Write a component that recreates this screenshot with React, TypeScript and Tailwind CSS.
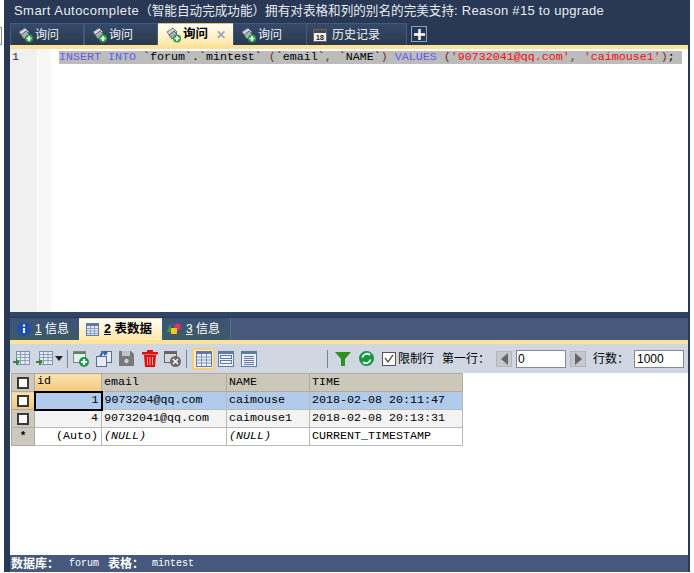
const mono = "font-['Liberation_Mono','DejaVu_Sans_Mono',monospace]"

const QueryIcon = () => (
  <svg width="17" height="17" viewBox="0 0 17 17" className="shrink-0">
    <path d="M2 6 L8 2 L12 6 L6 11 Z" fill="#d4d8dc" stroke="#6b7480" />
    <path d="M4 9 L9 5 L12 8 L7 13 Z" fill="#a9b0b8" stroke="#59626d" />
    <circle cx="12" cy="12.5" r="4" fill="#2f9e44" />
    <path d="M12 10 V15 M9.5 12.5 H14.5" stroke="#fff" strokeWidth="1.6" />
  </svg>
)

const CalendarIcon = () => (
  <svg width="14" height="14" viewBox="0 0 14 14" className="shrink-0">
    <rect x="0.5" y="1.5" width="13" height="12" fill="#f0f0f0" stroke="#666" />
    <rect x="1" y="2" width="12" height="3" fill="#4a4a4a" />
    <text x="7" y="12" textAnchor="middle" fontSize="7" fontWeight="700" fill="#222" fontFamily="Liberation Sans">18</text>
  </svg>
)

const Tab = ({ label, active, close }: { label: string; active?: boolean; close?: boolean }) => (
  <div
    className={
      active
        ? "flex h-[22px] w-[75px] items-center border-t border-[#e5c365] bg-gradient-to-b from-[#fffdf5] to-[#ffe8a6] pl-[7px] text-[12.5px] font-bold text-black"
        : "flex h-[22px] w-[74px] items-center border border-b-0 border-[#43597d] bg-gradient-to-b from-[#35496a] to-[#2a3a4c] pl-[6px] text-[12px] text-[#eef1f6]"
    }
  >
    <QueryIcon />
    <span className="ml-[1px]">{label}</span>
    {close && <span className="ml-[8px] text-[12px] font-bold text-[#9aa5bd]">✕</span>}
  </div>
)

const ToolGrid = ({ arrow }: { arrow?: boolean }) => (
  <svg width="17" height="17" viewBox="0 0 17 17" className="shrink-0">
    <rect x="3.5" y="1.5" width="13" height="13" fill="#e8edf5" stroke="#7d8fb0" />
    <path d="M3.5 4.5 H16.5 M3.5 7.5 H16.5 M3.5 10.5 H16.5 M7.5 2 V14 M12 2 V14" stroke="#8ea0bf" />
    {arrow && <path d="M0 11 H3 V8.5 L7 12 L3 15.5 V13 H0 Z" fill="#2f8a2f" />}
  </svg>
)

const ViewIcon = ({ kind }: { kind: "grid" | "form" | "text" }) => (
  <svg width="16" height="16" viewBox="0 0 16 16" className="shrink-0">
    <rect x="0.5" y="0.5" width="15" height="15" fill="#eef2f8" stroke="#5f7aa5" />
    <rect x="1" y="1" width="14" height="2" fill="#5f7aa5" />
    {kind === "grid" && <path d="M1 6 H15 M1 9 H15 M1 12 H15 M5.5 3 V15 M10.5 3 V15" stroke="#7f96bb" />}
    {kind === "form" && (
      <>
        <rect x="2.5" y="4.5" width="11" height="3" fill="none" stroke="#5f7aa5" />
        <rect x="2.5" y="9.5" width="11" height="3" fill="none" stroke="#5f7aa5" />
      </>
    )}
    {kind === "text" && <path d="M3 5.5 H13 M3 7.5 H13 M3 9.5 H13 M3 11.5 H13 M3 13.5 H13" stroke="#5f7aa5" />}
  </svg>
)

const Sep = () => <div className="mx-[3px] h-[18px] w-px bg-[#7a8494]" />

const RowHead = ({ active, star }: { active?: boolean; star?: boolean }) => (
  <td className={`h-[18px] w-[23px] border border-[#a9a9a9] p-0 text-center text-[11px] leading-none ${active ? "bg-gradient-to-b from-[#fbe3ae] to-[#f3c67b]" : "bg-[#cdcabd]"}`}>
    {star ? (
      <span className="font-bold">*</span>
    ) : (
      <span className="mx-auto block h-[12px] w-[12px] border-2 border-[#3a3a3a] bg-white" />
    )}
  </td>
)

const cell = "h-[18px] border border-[#b9b9b9] px-[2px] py-0 text-[11.67px] leading-none whitespace-nowrap"
const head = "h-[17px] border border-[#b0ad9f] px-[2px] py-0 text-left text-[11.67px] font-normal leading-none bg-[#cbc7b9]"

export default function App() {
  return (
    <div className="relative h-[573px] w-[694px] overflow-hidden bg-white pr-[4px] pb-[1px] pl-[4px] font-['Liberation_Sans','Noto_Sans_CJK_SC',sans-serif]">
      <div className="absolute top-[27px] left-0 h-[18px] w-[2px] border-y border-r border-[#888]" />
      <div className="flex h-full flex-col bg-[#293955] pr-[2px] pl-[6px]">
        {/* title */}
        <div className="flex h-[22px] shrink-0 items-center pl-[4px] text-[12.6px] whitespace-nowrap text-[#e8ecf2]">
          <span className="text-[13px] tracking-[0.45px]">Smart Autocomplete</span>
          <span>（智能自动完成功能）拥有对表格和列的别名的完美支持</span>
          <span className="text-[13px] tracking-[0.3px]">: Reason #15 to upgrade</span>
        </div>

        {/* query tabs */}
        <div className="flex h-[23px] shrink-0 items-end">
          <Tab label="询问" />
          <Tab label="询问" />
          <Tab label="询问" active close />
          <Tab label="询问" />
          <div className="-ml-px flex h-[22px] w-[101px] items-center gap-[5px] border border-b-0 border-[#43597d] bg-gradient-to-b from-[#35496a] to-[#2a3a4c] pl-[6px] text-[12px] text-[#eef1f6]">
            <CalendarIcon />
            <span>历史记录</span>
          </div>
          <div className="mb-[3px] ml-[4px] flex h-[16px] w-[16px] items-center justify-center border border-[#8fa0bb] bg-[#293955]">
            <svg width="11" height="11" viewBox="0 0 11 11">
              <path d="M5.5 0 V11 M0 5.5 H11" stroke="#fff" strokeWidth="2.4" />
            </svg>
          </div>
        </div>
        <div className="h-[4px] shrink-0 bg-[#fde29b]" />

        {/* editor */}
        <div className="flex h-[263px] shrink-0 bg-white">
          <div className={`w-[27px] shrink-0 bg-[#f0f0f0] pt-[2px] pl-[2px] text-[11.67px] leading-[13px] text-[#402040] ${mono}`}>1</div>
          <div className="w-[14px] shrink-0 bg-[#f7f7f7]" />
          <div className="min-w-0 flex-1 pt-[2px] pr-[6px] pl-[8px]">
            <div className={`h-[13px] bg-[#bcbcbc] text-[11.67px] leading-[13px] whitespace-pre ${mono}`}>
              <span className="text-[#5f5fe8]">INSERT INTO</span>
              <span className="text-black"> `forum`.`mintest` </span>
              <span className="text-[#7a2a10]">(</span>
              <span className="text-black">`email`</span>
              <span className="text-[#7a2a10]">,</span>
              <span className="text-black"> `NAME`</span>
              <span className="text-[#7a2a10]">)</span>
              <span className="text-[#5f5fe8]"> VALUES </span>
              <span className="text-[#7a2a10]">(</span>
              <span className="text-[#f01010]">'90732041@qq.com'</span>
              <span className="text-[#7a2a10]">, </span>
              <span className="text-[#f01010]">'caimouse1'</span>
              <span className="text-[#7a2a10]">)</span>
              <span className="text-black">;</span>
            </div>
          </div>
        </div>

        {/* splitter */}
        <div className="h-[6px] shrink-0 border-b border-[#293955] bg-[#2f4468]" />

        {/* result tabs */}
        <div className="flex h-[22px] shrink-0 items-end bg-[#46597c]">
          <div className="flex h-[22px] w-[69px] items-center gap-[4px] bg-gradient-to-b from-[#3c5377] to-[#3e5a66] pl-[7px] text-[12px] text-white">
            <svg width="14" height="14" viewBox="0 0 14 14" className="shrink-0">
              <circle cx="7" cy="7" r="7" fill="#1f4fa8" />
              <rect x="6" y="2.5" width="2" height="2" fill="#fff" />
              <rect x="6" y="6" width="2" height="5" fill="#fff" />
            </svg>
            <span><span className="underline">1</span> 信息</span>
          </div>
          <div className="flex h-[22px] w-[83px] items-center gap-[5px] border-t border-[#f0d68f] bg-gradient-to-b from-[#fffdf5] to-[#ffe8a6] pl-[7px] text-[12.5px] font-bold text-black">
            <svg width="13" height="13" viewBox="0 0 13 13" className="shrink-0">
              <rect x="0.5" y="0.5" width="12" height="12" fill="#e5eaf4" stroke="#5f7aa5" />
              <rect x="1" y="1" width="11" height="2" fill="#5f7aa5" />
              <path d="M1 5.5 H12 M1 8 H12 M1 10.5 H12 M4.5 3 V12 M8.5 3 V12" stroke="#8ea0bf" />
            </svg>
            <span><span className="underline">2</span> 表数据</span>
          </div>
          <div className="flex h-[22px] w-[69px] items-center gap-[4px] border-r border-[#5a6f90] bg-gradient-to-b from-[#3c5377] to-[#3e5a66] pl-[5px] text-[12px] text-white">
            <svg width="15" height="14" viewBox="0 0 15 14" className="shrink-0">
              <path d="M0 10 L3 2 L5 10 Z" fill="#2f9e44" />
              <circle cx="10.5" cy="5" r="3.5" fill="#d6336c" />
              <rect x="4" y="6" width="6" height="6" fill="#f5c518" />
            </svg>
            <span><span className="underline">3</span> 信息</span>
          </div>
        </div>
        <div className="h-[4px] shrink-0 bg-[#fde29b]" />

        {/* toolbar */}
        <div className="flex h-[29px] shrink-0 items-center bg-[#d0d7e3] pl-[3px] text-[12px] whitespace-nowrap text-black">
          <ToolGrid arrow />
          <div className="ml-[6px]"><ToolGrid arrow /></div>
          <svg width="8" height="5" viewBox="0 0 8 5" className="ml-[2px]"><path d="M0 0 H8 L4 5 Z" fill="#222" /></svg>
          <div className="ml-[1px]"><Sep /></div>
          <svg width="18" height="18" viewBox="0 0 18 18" className="ml-[1px]">
            <rect x="1.5" y="1.5" width="12" height="11" fill="#e8edf5" stroke="#7a8a80" />
            <rect x="2" y="2" width="11" height="2" fill="#4d8a5a" />
            <circle cx="12" cy="12" r="5" fill="#1f9a4a" />
            <path d="M12 9 V15 M9 12 H15" stroke="#fff" strokeWidth="2" />
          </svg>
          <svg width="18" height="18" viewBox="0 0 18 18" className="ml-[5px]">
            <rect x="6.5" y="1.5" width="10" height="11" fill="#e8edf5" stroke="#54709a" />
            <rect x="1.5" y="6.5" width="10" height="10" fill="#e8edf5" stroke="#54709a" />
            <path d="M5 7 A5 5 0 0 1 12 3 L10 1 M12 3 L9 5" fill="none" stroke="#2d5fa8" strokeWidth="1.6" />
          </svg>
          <svg width="15" height="15" viewBox="0 0 15 15" className="ml-[6px]">
            <path d="M0 0 H12 L15 3 V15 H0 Z" fill="#77787a" />
            <rect x="3" y="0" width="8" height="5" fill="#c0c2c6" />
            <circle cx="7.5" cy="10" r="2.2" fill="#cfd0d3" />
          </svg>
          <svg width="16" height="17" viewBox="0 0 16 17" className="ml-[8px]">
            <rect x="0" y="2" width="16" height="2.5" fill="#e01010" />
            <rect x="5" y="0" width="6" height="2" fill="#e01010" />
            <path d="M2 5 H14 L13 17 H3 Z" fill="#e01010" />
            <path d="M5.5 7 V15 M8 7 V15 M10.5 7 V15" stroke="#ffb0a8" />
          </svg>
          <svg width="17" height="16" viewBox="0 0 17 16" className="ml-[6px]">
            <rect x="0.5" y="0.5" width="12" height="11" fill="#d8d8d8" stroke="#666" />
            <rect x="1" y="1" width="11" height="2" fill="#666" />
            <circle cx="11.5" cy="10.5" r="5.5" fill="#6a6a6a" />
            <path d="M9 8 L14 13 M14 8 L9 13" stroke="#fff" strokeWidth="1.6" />
          </svg>
          <div className="ml-[2px]"><Sep /></div>
          <div className="ml-[2px] flex h-[22px] w-[23px] items-center justify-center border-2 border-[#f5cf80] bg-[#fbeccb]">
            <ViewIcon kind="grid" />
          </div>
          <div className="ml-[3px]"><ViewIcon kind="form" /></div>
          <div className="ml-[7px]"><ViewIcon kind="text" /></div>
          <div className="ml-[67px]"><Sep /></div>
          <svg width="16" height="14" viewBox="0 0 16 14" className="ml-[4px]">
            <path d="M0 0 H16 L10 7 V14 H6 V7 Z" fill="#2f8f1f" />
          </svg>
          <svg width="15" height="15" viewBox="0 0 15 15" className="ml-[8px]">
            <circle cx="7.5" cy="7.5" r="7.5" fill="#15963f" />
            <path d="M3.5 6.5 A4.5 4.5 0 0 1 11 4 M11.5 8.5 A4.5 4.5 0 0 1 4 11" fill="none" stroke="#fff" strokeWidth="1.8" />
          </svg>
          <span className="ml-[8px] flex h-[14px] w-[14px] items-center justify-center border border-[#555] bg-white">
            <svg width="10" height="9" viewBox="0 0 10 9"><path d="M1 4 L4 8 L9 1" fill="none" stroke="#555" strokeWidth="1.3" /></svg>
          </span>
          <span className="ml-[2px]">限制行</span>
          <span className="ml-[8px] w-[48px]">第一行：</span>
          <div className="ml-[6px] flex h-[16px] w-[16px] items-center justify-center border border-[#b5b5b5] bg-[#c5c8ce]">
            <svg width="7" height="12" viewBox="0 0 7 12"><path d="M7 0 V12 L0 6 Z" fill="#666" /></svg>
          </div>
          <div className="ml-[4px] flex h-[18px] w-[50px] items-center border border-[#888] bg-white pl-[1px] text-[12px]">0</div>
          <div className="ml-[4px] flex h-[16px] w-[16px] items-center justify-center border border-[#b5b5b5] bg-[#c5c8ce]">
            <svg width="7" height="12" viewBox="0 0 7 12"><path d="M0 0 V12 L7 6 Z" fill="#666" /></svg>
          </div>
          <span className="ml-[7px] w-[36px]">行数：</span>
          <div className="ml-[5px] flex h-[18px] w-[50px] items-center border border-[#888] bg-white pl-[2px] text-[12px]">1000</div>
        </div>

        {/* result grid */}
        <div className="min-h-0 flex-1 bg-white pl-[1px]">
          <table className={`table-fixed border-collapse ${mono}`}>
            <colgroup>
              <col className="w-[23px]" />
              <col className="w-[67px]" />
              <col className="w-[125px]" />
              <col className="w-[83px]" />
              <col className="w-[153px]" />
            </colgroup>
            <tbody>
              <tr>
                <RowHead />
                <td className={`${head} bg-gradient-to-b from-[#fbe3ae] to-[#f3c67b]`}>id</td>
                <td className={head}>email</td>
                <td className={head}>NAME</td>
                <td className={head}>TIME</td>
              </tr>
              <tr className="bg-[#b1cbec]">
                <RowHead active />
                <td className="h-[18px] border-2 border-black py-0 pr-[2px] pl-[1px] text-right text-[11.67px] leading-none">1</td>
                <td className={cell}>9073204@qq.com</td>
                <td className={cell}>caimouse</td>
                <td className={cell}>2018-02-08 20:11:47</td>
              </tr>
              <tr className="bg-[#f3f3f3]">
                <RowHead />
                <td className={`${cell} pr-[3px] text-right`}>4</td>
                <td className={cell}>90732041@qq.com</td>
                <td className={cell}>caimouse1</td>
                <td className={cell}>2018-02-08 20:13:31</td>
              </tr>
              <tr className="bg-white">
                <RowHead star />
                <td className={`${cell} pr-[3px] text-right`}>(Auto)</td>
                <td className={`${cell} italic`}>(NULL)</td>
                <td className={`${cell} italic`}>(NULL)</td>
                <td className={cell}>CURRENT_TIMESTAMP</td>
              </tr>
            </tbody>
          </table>
        </div>

        {/* status bar */}
        <div className="flex h-[17px] shrink-0 items-center bg-[#46597c] pl-[1px] text-[12px] whitespace-nowrap text-white">
          <span className="font-bold">数据库：</span>
          <span className={`ml-[10px] text-[10px] ${mono}`}>forum</span>
          <span className="ml-[9px] font-bold">表格：</span>
          <span className={`ml-[8px] text-[10px] ${mono}`}>mintest</span>
        </div>
      </div>
    </div>
  )
}
